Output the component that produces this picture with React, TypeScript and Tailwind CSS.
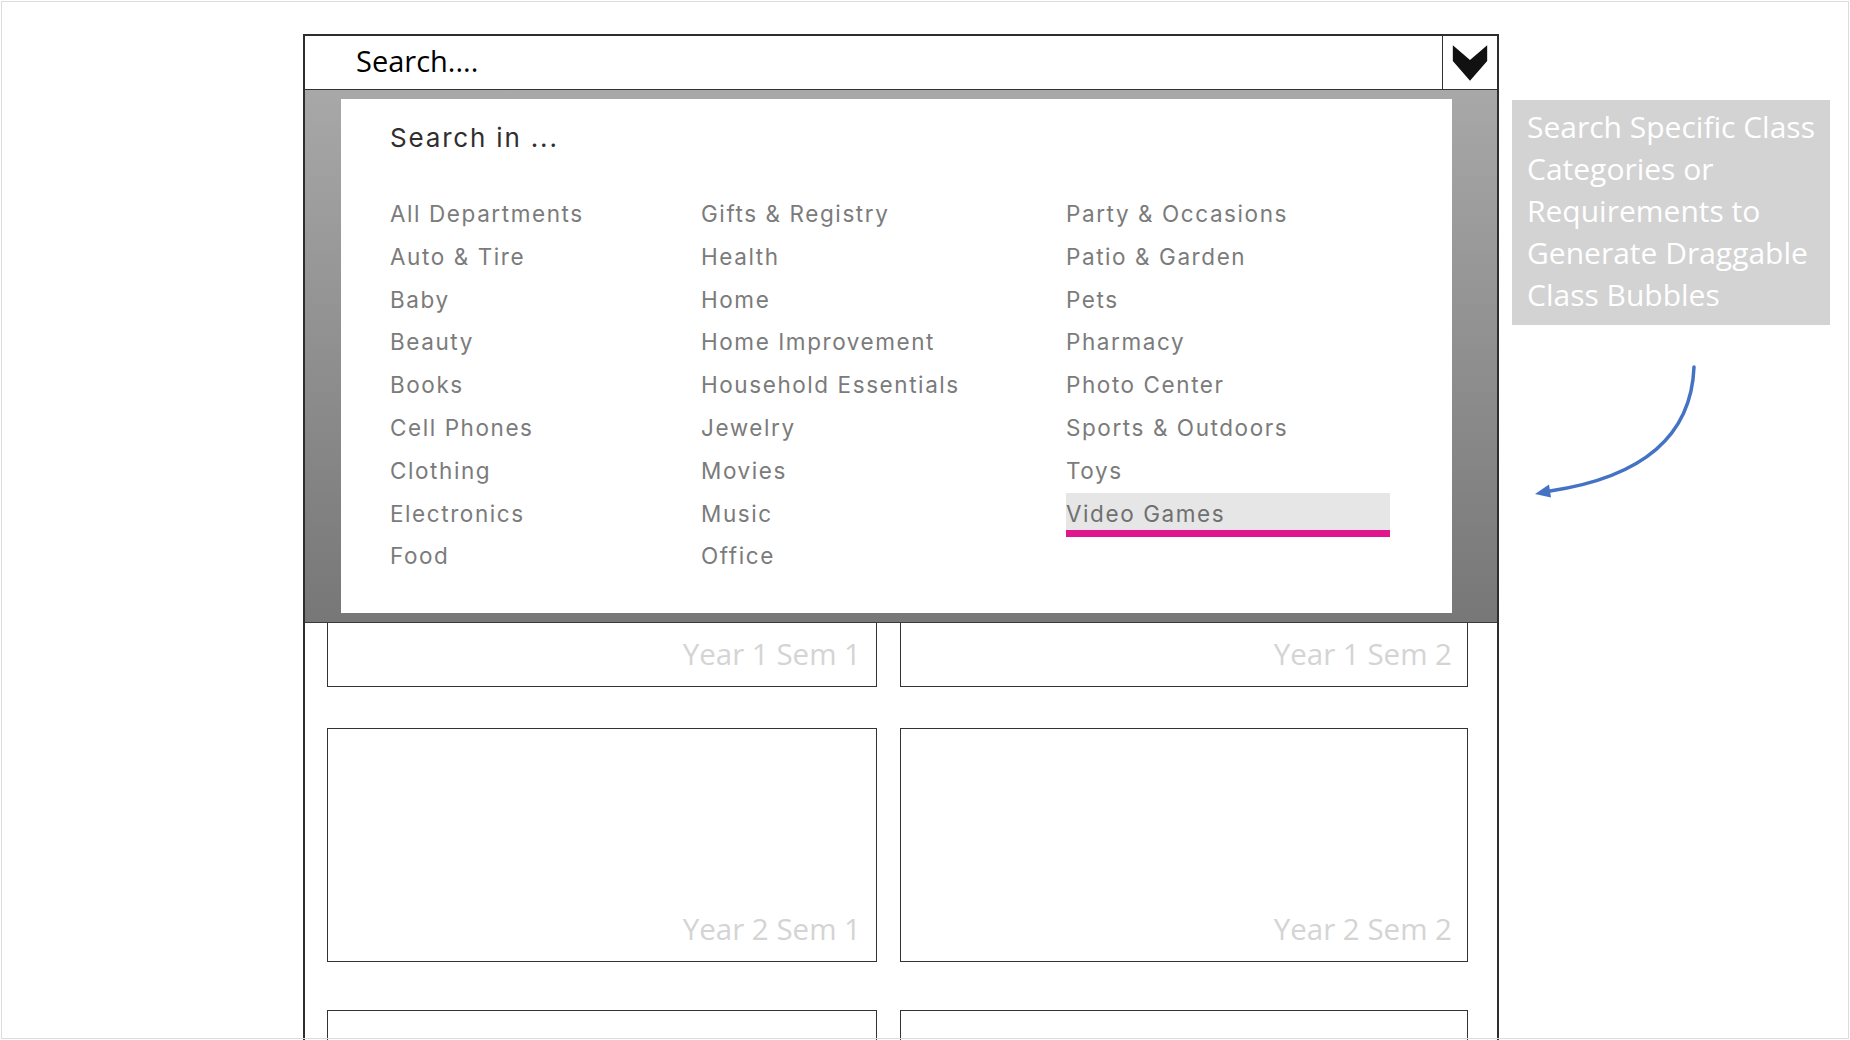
import React from "react";

const col1 = ["All Departments", "Auto & Tire", "Baby", "Beauty", "Books", "Cell Phones", "Clothing", "Electronics", "Food"];
const col2 = ["Gifts & Registry", "Health", "Home", "Home Improvement", "Household Essentials", "Jewelry", "Movies", "Music", "Office"];
const col3 = ["Party & Occasions", "Patio & Garden", "Pets", "Pharmacy", "Photo Center", "Sports & Outdoors", "Toys"];

const itemCls =
  "h-[42.8px] whitespace-nowrap leading-[42.8px] text-[22.5px] tracking-[0.07em] text-[#7b7b7b]";

// box for one semester, label sits bottom right
const SemBox = ({ label }: { label?: string }) => (
  <div className="flex h-[234px] items-end justify-end border-[1.5px] border-[#333] pb-[12px] pr-[15px]">
    {label && <span className="text-[29.5px] leading-[40px] text-[#d4d4d4]">{label}</span>}
  </div>
);

const App = () => {
  return (
    <div className="relative h-[1040px] w-[1850px] overflow-hidden bg-white font-['Open_Sans',sans-serif]">
      <div className="flex h-full pl-[303px] pt-[34px]">
        {/* main frame */}
        <div className="flex w-[1196px] flex-col border-2 border-b-0 border-[#2e2e2e]">
          {/* search bar */}
          <div className="flex h-[54px] border-b-[1.5px] border-[#333]">
            <div className="flex flex-1 items-center pb-[4px] pl-[51px] text-[29px] text-black">Search....</div>
            <div className="flex w-[55px] items-center justify-center border-l-[1.5px] border-[#333]">
              <svg width="55" height="54" viewBox="0 0 55 54">
                <polygon points="10,9 27.5,24 45,9 45,25 27.5,45 10,25" fill="#111" />
              </svg>
            </div>
          </div>

          {/* semester boxes */}
          <div className="relative flex-1">
            <div className="flex flex-col pl-[22px] pt-[363px]">
              <div className="grid grid-cols-[550px_568px] gap-x-[23px]">
                <SemBox label="Year 1 Sem 1" />
                <SemBox label="Year 1 Sem 2" />
              </div>
              <div className="mt-[41px] grid grid-cols-[550px_568px] gap-x-[23px]">
                <SemBox label="Year 2 Sem 1" />
                <SemBox label="Year 2 Sem 2" />
              </div>
              <div className="mt-[48px] grid grid-cols-[550px_568px] gap-x-[23px]">
                <SemBox />
                <SemBox />
              </div>
            </div>

            {/* dropdown */}
            <div className="absolute left-0 right-0 top-0 flex h-[533px] border-b-[1.5px] border-[#3a3a3a] bg-linear-to-b from-[#a8a8a8] to-[#777] pb-[9px] pl-[36px] pr-[45px] pt-[9px]">
              <div className="flex-1 bg-white pl-[49px] pt-[21px] font-['Inter',sans-serif]">
                <div className="text-[26px] leading-[36px] tracking-[0.07em] text-[#2f2f2f]">Search in ...</div>
                <div className="mt-[37px] grid grid-cols-[311px_365px_1fr]">
                  <div className="flex flex-col">
                    {col1.map((c) => (
                      <div key={c} className={itemCls}>{c}</div>
                    ))}
                  </div>
                  <div className="flex flex-col">
                    {col2.map((c) => (
                      <div key={c} className={itemCls}>{c}</div>
                    ))}
                  </div>
                  <div className="flex flex-col">
                    {col3.map((c) => (
                      <div key={c} className={itemCls}>{c}</div>
                    ))}
                    <div className="h-[44px] w-[324px] border-b-[7px] border-[#e0168c] bg-[#e6e6e6] pt-[4px] text-[22.5px] leading-[34px] tracking-[0.07em] text-[#707070]">
                      Video Games
                    </div>
                  </div>
                </div>
              </div>
            </div>
          </div>
        </div>

        {/* note */}
        <div className="ml-[13px] mt-[66px] h-[225px] w-[318px] bg-[#d3d3d3] pl-[15px] pt-[6px] text-[30px] leading-[42px] text-white">
          <div className="whitespace-nowrap">Search Specific Class</div>
          <div className="whitespace-nowrap">Categories or</div>
          <div className="whitespace-nowrap">Requirements to</div>
          <div className="whitespace-nowrap">Generate Draggable</div>
          <div className="whitespace-nowrap">Class Bubbles</div>
        </div>
      </div>

      {/* curved arrow */}
      <svg className="pointer-events-none absolute left-0 top-0" width="1850" height="1040">
        <path d="M1694 367 Q1690 470 1550 491" fill="none" stroke="#4472c4" strokeWidth="3.5" strokeLinecap="round" />
        <polygon points="1535,494 1551,497.5 1549,484.5" fill="#4472c4" />
      </svg>

      {/* slide edge */}
      <div className="pointer-events-none absolute inset-[1px] border border-[#dcdcdc]" />
    </div>
  );
};

export default App;
